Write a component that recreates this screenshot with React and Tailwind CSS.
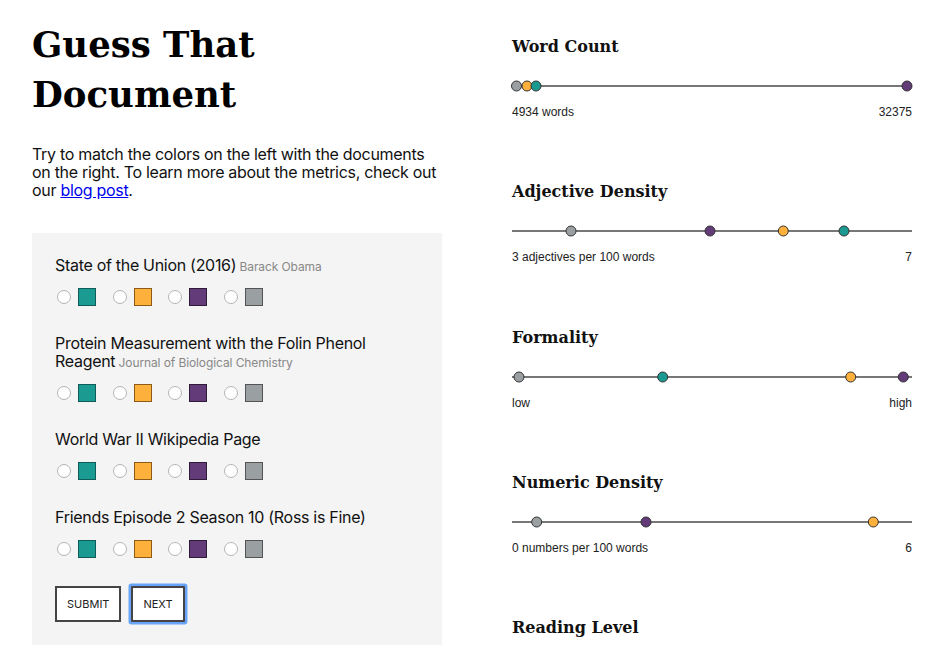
import React, { useState } from 'react';

const COLORS = {
  teal: { fill: '#1b9a92', edge: '#0f5d58' },
  orange: { fill: '#fdb03b', edge: '#8d5c14' },
  purple: { fill: '#633b79', edge: '#2e1b3a' },
  gray: { fill: '#9a9fa2', edge: '#545454' },
};

const ORDER = ['teal', 'orange', 'purple', 'gray'];

const documents = [
  { id: 'sotu', title: 'State of the Union (2016)', source: 'Barack Obama' },
  { id: 'folin', title: 'Protein Measurement with the Folin Phenol Reagent', source: 'Journal of Biological Chemistry' },
  { id: 'ww2', title: 'World War II Wikipedia Page', source: '' },
  { id: 'friends', title: 'Friends Episode 2 Season 10 (Ross is Fine)', source: '' },
];

// x positions are px along a 400px track
const metrics = [
  {
    name: 'Word Count',
    low: '4934 words',
    high: '32375',
    dots: [['gray', 4.5], ['orange', 15], ['teal', 24], ['purple', 395]],
  },
  {
    name: 'Adjective Density',
    low: '3 adjectives per 100 words',
    high: '7',
    dots: [['gray', 59], ['purple', 198], ['orange', 271.3], ['teal', 332]],
  },
  {
    name: 'Formality',
    low: 'low',
    high: 'high',
    dots: [['gray', 7], ['teal', 150.7], ['orange', 338.7], ['purple', 391.3]],
  },
  {
    name: 'Numeric Density',
    low: '0 numbers per 100 words',
    high: '6',
    dots: [['gray', 24.7], ['purple', 134], ['orange', 361.3]],
  },
  {
    name: 'Reading Level',
    low: 'grade 6',
    high: '16',
    dots: [['gray', 40], ['orange', 180], ['teal', 260], ['purple', 370]],
  },
];

const MetricChart = ({ metric }) => (
  <section>
    <h2 className="text-[16px] leading-[24px] font-bold text-[#111] font-['DejaVu_Serif',serif]">
      {metric.name}
    </h2>
    <svg width="400" height="24" viewBox="0 0 400 24" className="mt-[15px] block overflow-visible">
      <line x1="0" y1="12" x2="400" y2="12" stroke="#777" strokeWidth="2" />
      {metric.dots.map(([color, x]) => (
        <circle key={color} cx={x} cy="12" r="5" fill={COLORS[color].fill} stroke="#333" strokeWidth="1" />
      ))}
    </svg>
    <div className="mt-[6px] flex justify-between text-[12px] leading-[16px] text-[#222] font-['Liberation_Sans',Arial,sans-serif]">
      <span>{metric.low}</span>
      <span>{metric.high}</span>
    </div>
  </section>
);

const App = () => {
  const [answers, setAnswers] = useState({});

  const choose = (docId, color) => {
    setAnswers(prev => ({ ...prev, [docId]: color }));
  };

  return (
    <div className="flex bg-white font-['Inter',sans-serif] text-[#111]">
      {/* Left: quiz */}
      <div className="w-[410px] ml-[32px] pt-[20px] shrink-0">
        <h1 className="text-[35.5px] leading-[50px] font-bold font-['DejaVu_Serif',serif] text-black">
          Guess That<br />Document
        </h1>
        <p className="mt-[25px] text-[16px] leading-[18px] tracking-[-0.3px]">
          Try to match the colors on the left with the documents on the right. To learn more about the metrics, check out our{' '}
          <a href="#" className="text-[#0000ee] underline">blog post</a>.
        </p>

        <div className="mt-[34px] bg-[#f4f4f4] p-[23px] flex flex-col gap-[28px]">
          {documents.map(doc => (
            <div key={doc.id}>
              <p className="text-[16px] leading-[18px] tracking-[-0.3px]">
                {doc.title}
                {doc.source && (
                  <span className="text-[12px] leading-none tracking-[-0.1px] text-[#888]"> {doc.source}</span>
                )}
              </p>
              <div className="mt-[14px] ml-[2px] flex items-center gap-[16.7px] h-[18px]">
                {ORDER.map(color => (
                  <label key={color} className="flex items-center gap-[7px] cursor-pointer">
                    <input
                      type="radio"
                      name={doc.id}
                      checked={answers[doc.id] === color}
                      onChange={() => choose(doc.id, color)}
                      className="appearance-none w-[14px] h-[14px] rounded-full border border-[#b5b5b5] bg-white checked:border-[4px] checked:border-[#1a73e8]"
                    />
                    <span
                      className={`w-[18px] h-[18px] border ${
                        color === 'teal' ? 'bg-[#1b9a92] border-[#0f5d58]' :
                        color === 'orange' ? 'bg-[#fdb03b] border-[#8d5c14]' :
                        color === 'purple' ? 'bg-[#633b79] border-[#2e1b3a]' :
                        'bg-[#9a9fa2] border-[#545454]'
                      }`}
                    />
                  </label>
                ))}
              </div>
            </div>
          ))}

          <div className="flex gap-[10px]">
            <button className="h-[36px] px-[10px] border-2 border-[#444] bg-white text-[11px] text-[#222] uppercase">
              Submit
            </button>
            <button className="h-[36px] px-[10px] border-2 border-[#444] bg-white text-[11px] text-[#222] uppercase rounded-[1px] shadow-[0_0_0_2.5px_#6aa4f8]">
              Next
            </button>
          </div>
        </div>
      </div>

      {/* Right: metrics */}
      <div className="w-[400px] ml-[70px] pt-[35px] shrink-0 flex flex-col gap-[60.33px]">
        {metrics.map(m => (
          <MetricChart key={m.name} metric={m} />
        ))}
      </div>
    </div>
  );
};

export default App;
